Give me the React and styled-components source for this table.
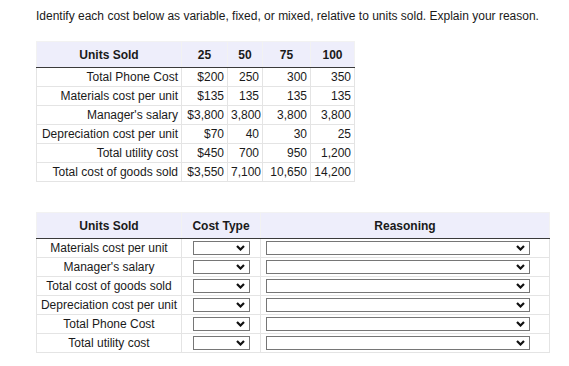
import React from "react";
import styled, { createGlobalStyle } from "styled-components";

const GlobalStyle = createGlobalStyle`
  body {
    margin: 0;
    background: #ffffff;
    font-family: "Liberation Sans", Arial, sans-serif;
    font-size: 12px;
    color: #1a1a1a;
  }
`;

const Page = styled.div`
  padding: 9px 0 0 36px;
`;

const Prompt = styled.p`
  margin: 0 0 18px;
  line-height: 14px;
`;

const Table = styled.table`
  border-collapse: collapse;
  width: ${(p) => p.width}px;
  margin-bottom: ${(p) => p.gap || 0}px;
  table-layout: fixed;
`;

const HeadCell = styled.th`
  background: #eeeefb;
  font-weight: bold;
  text-align: center;
  height: 25px;
  padding: 0 4px;
  border: 1px solid #f2f2f2;
  border-bottom: 1px solid #3a3a3a;
`;

const Cell = styled.td`
  height: 18px;
  padding: 0 3px;
  border: 1px solid #e4e4e4;
  text-align: ${(p) => p.align || "right"};
  white-space: nowrap;
  line-height: 14px;
`;

const SelectBox = styled.div`
  box-sizing: border-box;
  width: ${(p) => p.width}px;
  height: 14px;
  margin: 0 auto;
  border: 1px solid #767676;
  display: flex;
  align-items: center;
  justify-content: flex-end;
  padding-right: 4px;
  background: #fff;
`;

function Chevron() {
  return (
    <svg width="9" height="6" viewBox="0 0 9 6">
      <path d="M1 1 L4.5 4.5 L8 1" fill="none" stroke="#111" strokeWidth="2.2" />
    </svg>
  );
}

const costRows = [
  ["Total Phone Cost", "$200", "250", "300", "350"],
  ["Materials cost per unit", "$135", "135", "135", "135"],
  ["Manager's salary", "$3,800", "3,800", "3,800", "3,800"],
  ["Depreciation cost per unit", "$70", "40", "30", "25"],
  ["Total utility cost", "$450", "700", "950", "1,200"],
  ["Total cost of goods sold", "$3,550", "7,100", "10,650", "14,200"],
];

const answerRows = [
  "Materials cost per unit",
  "Manager's salary",
  "Total cost of goods sold",
  "Depreciation cost per unit",
  "Total Phone Cost",
  "Total utility cost",
];

export default function App() {
  return (
    <Page>
      <GlobalStyle />
      <Prompt>
        Identify each cost below as variable, fixed, or mixed, relative to units sold. Explain your reason.
      </Prompt>

      <Table width={318} gap={30}>
        <colgroup>
          <col style={{ width: 145 }} />
          <col style={{ width: 46 }} />
          <col style={{ width: 35 }} />
          <col style={{ width: 48 }} />
          <col style={{ width: 44 }} />
        </colgroup>
        <thead>
          <tr>
            <HeadCell>Units Sold</HeadCell>
            <HeadCell>25</HeadCell>
            <HeadCell>50</HeadCell>
            <HeadCell>75</HeadCell>
            <HeadCell>100</HeadCell>
          </tr>
        </thead>
        <tbody>
          {costRows.map((row) => (
            <tr key={row[0]}>
              {row.map((v, i) => (
                <Cell key={i}>{v}</Cell>
              ))}
            </tr>
          ))}
        </tbody>
      </Table>

      <Table width={513}>
        <colgroup>
          <col style={{ width: 145 }} />
          <col style={{ width: 79 }} />
          <col style={{ width: 289 }} />
        </colgroup>
        <thead>
          <tr>
            <HeadCell>Units Sold</HeadCell>
            <HeadCell>Cost Type</HeadCell>
            <HeadCell>Reasoning</HeadCell>
          </tr>
        </thead>
        <tbody>
          {answerRows.map((label) => (
            <tr key={label}>
              <Cell align="center">{label}</Cell>
              <Cell>
                <SelectBox width={57}>
                  <Chevron />
                </SelectBox>
              </Cell>
              <Cell>
                <SelectBox width={264} style={{ marginLeft: 2 }}>
                  <Chevron />
                </SelectBox>
              </Cell>
            </tr>
          ))}
        </tbody>
      </Table>
    </Page>
  );
}
